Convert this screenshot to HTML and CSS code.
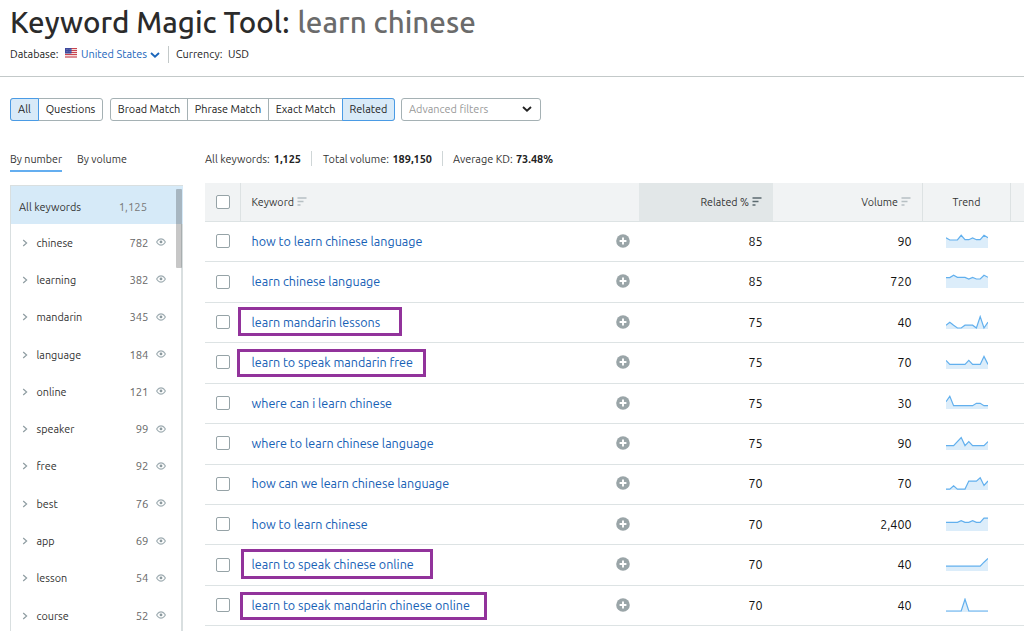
FILE: index.html
```html
<!DOCTYPE html>
<html lang="en">
<head>
<meta charset="utf-8">
<title>Keyword Magic Tool</title>
<link rel="stylesheet" href="styles.css">
</head>
<body>
<svg class="defs" width="0" height="0">
  <symbol id="eye" viewBox="0 0 10 8"><path d="M.6 4C2 1.6 3.3.9 5 .9S8 1.600 9.400 4C8 6.400 6.700 7.100 5 7.100S2 6.400.600 4Z" fill="none" stroke="#a3b0b5" stroke-width="1.100"/><circle cx="5" cy="3.900" r="1.400" fill="#8c9a9f"/></symbol>
  <symbol id="chev" viewBox="0 0 6 8"><path d="M1.200 1 4.600 4 1.200 7" fill="none" stroke="#8f9da2" stroke-width="1.200"/></symbol>
  <symbol id="down" viewBox="0 0 10 6"><path d="M1 1 5 4.600 9 1" fill="none" stroke="currentColor" stroke-width="1.900"/></symbol>
  <symbol id="sort" viewBox="0 0 10 9"><path d="M.5 1H9.500M.5 4.500H6.500M.5 8H3.500" fill="none" stroke="currentColor" stroke-width="1.700"/></symbol>
  <symbol id="plus" viewBox="0 0 14 14"><circle cx="7" cy="7" r="6.800" fill="#9aa5a8"/><path d="M7 3.600V10.400M3.600 7H10.400" stroke="#fff" stroke-width="1.900"/></symbol>
</svg>

<header class="header">
  <h1 class="title"><span class="title-main">Keyword Magic Tool:</span> <span class="title-query">learn chinese</span></h1>
  <div class="meta">
    <span class="meta-label">Database:</span>
    <svg class="flag" viewBox="0 0 12 10"><rect width="12" height="10" fill="#f3dcdc"/><path d="M0 .5H12M0 2.500H12M0 4.500H12M0 6.500H12M0 9H12" stroke="#c9434e"/><rect width="6.500" height="5.500" fill="#3f4a9c"/><path d="M1 1.500H6M1 3.500H6" stroke="#8d94cc" stroke-width=".6" stroke-dasharray=".7 .7"/></svg>
    <a class="country">United States</a>
    <svg class="meta-down"><use href="#down"/></svg>
    <span class="currency-label">Currency:</span>
    <span class="currency">USD</span>
  </div>
</header>

<nav class="filters">
  <div class="group group-a"><span class="btn on w28">All</span><span class="btn w64">Questions</span></div>
  <div class="group group-b"><span class="btn w76">Broad Match</span><span class="btn w81">Phrase Match</span><span class="btn w74">Exact Match</span><span class="btn on w53">Related</span></div>
  <div class="advanced"><span>Advanced filters</span><svg><use href="#down"/></svg></div>
</nav>

<main class="main">
  <aside class="side">
    <div class="tabs"><span class="tab active">By number</span><span class="tab">By volume</span></div>
    <div class="groups">
      <div class="all"><span class="all-name">All keywords</span><span class="all-count">1,125</span></div>
      <div class="thumb"></div>
      <div class="item"><svg class="chev"><use href="#chev"/></svg><span class="name">chinese</span><span class="count">782</span><svg class="eye"><use href="#eye"/></svg></div>
      <div class="item"><svg class="chev"><use href="#chev"/></svg><span class="name">learning</span><span class="count">382</span><svg class="eye"><use href="#eye"/></svg></div>
      <div class="item"><svg class="chev"><use href="#chev"/></svg><span class="name">mandarin</span><span class="count">345</span><svg class="eye"><use href="#eye"/></svg></div>
      <div class="item"><svg class="chev"><use href="#chev"/></svg><span class="name">language</span><span class="count">184</span><svg class="eye"><use href="#eye"/></svg></div>
      <div class="item"><svg class="chev"><use href="#chev"/></svg><span class="name">online</span><span class="count">121</span><svg class="eye"><use href="#eye"/></svg></div>
      <div class="item"><svg class="chev"><use href="#chev"/></svg><span class="name">speaker</span><span class="count">99</span><svg class="eye"><use href="#eye"/></svg></div>
      <div class="item"><svg class="chev"><use href="#chev"/></svg><span class="name">free</span><span class="count">92</span><svg class="eye"><use href="#eye"/></svg></div>
      <div class="item"><svg class="chev"><use href="#chev"/></svg><span class="name">best</span><span class="count">76</span><svg class="eye"><use href="#eye"/></svg></div>
      <div class="item"><svg class="chev"><use href="#chev"/></svg><span class="name">app</span><span class="count">69</span><svg class="eye"><use href="#eye"/></svg></div>
      <div class="item"><svg class="chev"><use href="#chev"/></svg><span class="name">lesson</span><span class="count">54</span><svg class="eye"><use href="#eye"/></svg></div>
      <div class="item"><svg class="chev"><use href="#chev"/></svg><span class="name">course</span><span class="count">52</span><svg class="eye"><use href="#eye"/></svg></div>
    </div>
  </aside>

  <section class="content">
    <div class="stats">
      <div class="stat s1"><span>All keywords:</span><b>1,125</b></div>
      <div class="stat s2"><span>Total volume:</span><b>189,150</b></div>
      <div class="stat s3"><span>Average KD:</span><b>73.48%</b></div>
    </div>
    <div class="table">
      <div class="row head">
        <div class="cell check"><i class="box"></i></div>
        <div class="cell kw"><span class="h-kw">Keyword</span><svg class="sort"><use href="#sort"/></svg></div>
        <div class="cell num sorted"><span class="h-rel">Related %</span><svg class="sort"><use href="#sort"/></svg></div>
        <div class="cell num vol"><span class="h-vol">Volume</span><svg class="sort"><use href="#sort"/></svg></div>
        <div class="cell trend">Trend</div>
        <div class="cell last"></div>
      </div>
      <div class="row"><div class="cell check"><i class="box"></i></div><div class="cell kw"><a>how to learn chinese language</a><svg class="plus"><use href="#plus"/></svg></div><div class="cell num">85</div><div class="cell num vol">90</div><div class="cell trend"><svg class="spark"><path class="fill" d="M0 3.700 3.800 6H11.400L15.200 1.300 19 5.700H22.800L26.600 4 30.400 5.700H34.200L38 1.300 42 3.700V14H0Z"/><path class="line" d="M0 3.700 3.800 6H11.400L15.200 1.300 19 5.700H22.800L26.600 4 30.400 5.700H34.200L38 1.300 42 3.700"/></svg></div></div>
      <div class="row"><div class="cell check"><i class="box"></i></div><div class="cell kw"><a>learn chinese language</a><svg class="plus"><use href="#plus"/></svg></div><div class="cell num">85</div><div class="cell num vol">720</div><div class="cell trend"><svg class="spark"><path class="fill" d="M0 3.600H3.800L7.600 1.300 11.400 3.400H19L22.800 5 26.600 3.400 30.400 5H34.200L38 1.300 42 3.300V14H0Z"/><path class="line" d="M0 3.600H3.800L7.600 1.300 11.400 3.400H19L22.800 5 26.600 3.400 30.400 5H34.200L38 1.300 42 3.300"/></svg></div></div>
      <div class="row"><div class="cell check"><i class="box"></i></div><div class="cell kw"><a>learn mandarin lessons</a><i class="mark m1"></i><svg class="plus"><use href="#plus"/></svg></div><div class="cell num">75</div><div class="cell num vol">40</div><div class="cell trend"><svg class="spark"><path class="fill" d="M0 10.200 3.800 7.200 7.600 10.200 11.400 13H15.200L19 10.200H26.600L30.400 13 34.200 1.600 38 13 42 7.200V14H0Z"/><path class="line" d="M0 10.200 3.800 7.200 7.600 10.200 11.400 13H15.200L19 10.200H26.600L30.400 13 34.200 1.600 38 13 42 7.200"/></svg></div></div>
      <div class="row"><div class="cell check"><i class="box"></i></div><div class="cell kw"><a>learn to speak mandarin free</a><i class="mark m2"></i><svg class="plus"><use href="#plus"/></svg></div><div class="cell num">75</div><div class="cell num vol">70</div><div class="cell trend"><svg class="spark"><path class="fill" d="M0 5.400 3.800 9.400H19L22.800 5.400 26.600 9.400H34.200L38 1.400 42 9.400V14H0Z"/><path class="line" d="M0 5.400 3.800 9.400H19L22.800 5.400 26.600 9.400H34.200L38 1.400 42 9.400"/></svg></div></div>
      <div class="row"><div class="cell check"><i class="box"></i></div><div class="cell kw"><a>where can i learn chinese</a><svg class="plus"><use href="#plus"/></svg></div><div class="cell num">75</div><div class="cell num vol">30</div><div class="cell trend"><svg class="spark"><path class="fill" d="M0 6.700 3.800 1.300 7.600 10.700H26.600L30.400 8.300H34.200L38 10.700H42V14H0Z"/><path class="line" d="M0 6.700 3.800 1.300 7.600 10.700H26.600L30.400 8.300H34.200L38 10.700H42"/></svg></div></div>
      <div class="row"><div class="cell check"><i class="box"></i></div><div class="cell kw"><a>where to learn chinese language</a><svg class="plus"><use href="#plus"/></svg></div><div class="cell num">75</div><div class="cell num vol">90</div><div class="cell trend"><svg class="spark"><path class="fill" d="M0 9.600H7.600L15.200 1.600 19 9.600 22.800 5.600 26.600 9.600H38L42 5.600V14H0Z"/><path class="line" d="M0 9.600H7.600L15.200 1.600 19 9.600 22.800 5.600 26.600 9.600H38L42 5.600"/></svg></div></div>
      <div class="row"><div class="cell check"><i class="box"></i></div><div class="cell kw"><a>how can we learn chinese language</a><svg class="plus"><use href="#plus"/></svg></div><div class="cell num">70</div><div class="cell num vol">70</div><div class="cell trend"><svg class="spark"><path class="fill" d="M0 13.100H3.800L7.600 9.800 11.400 13.100H19L22.800 5.100H30.400L34.200 1.800 38 9.400 42 5V14H0Z"/><path class="line" d="M0 13.100H3.800L7.600 9.800 11.400 13.100H19L22.800 5.100H30.400L34.200 1.800 38 9.400 42 5"/></svg></div></div>
      <div class="row"><div class="cell check"><i class="box"></i></div><div class="cell kw"><a>how to learn chinese</a><svg class="plus"><use href="#plus"/></svg></div><div class="cell num">70</div><div class="cell num vol">2,400</div><div class="cell trend"><svg class="spark"><path class="fill" d="M0 5.400H11.400L15.200 3.700 19 5.400H22.800L26.600 3.700 30.400 5.400H34.200L38 1.100H42V14H0Z"/><path class="line" d="M0 5.400H11.400L15.200 3.700 19 5.400H22.800L26.600 3.700 30.400 5.400H34.200L38 1.100H42"/></svg></div></div>
      <div class="row"><div class="cell check"><i class="box"></i></div><div class="cell kw"><a>learn to speak chinese online</a><i class="mark m3"></i><svg class="plus"><use href="#plus"/></svg></div><div class="cell num">70</div><div class="cell num vol">40</div><div class="cell trend"><svg class="spark"><path class="fill" d="M0 9.200H34.200L38 5.200 42 1.500V14H0Z"/><path class="line" d="M0 9.200H34.200L38 5.200 42 1.500"/></svg></div></div>
      <div class="row"><div class="cell check"><i class="box"></i></div><div class="cell kw"><a>learn to speak mandarin chinese online</a><i class="mark m4"></i><svg class="plus"><use href="#plus"/></svg></div><div class="cell num">70</div><div class="cell num vol">40</div><div class="cell trend"><svg class="spark"><path class="fill" d="M0 13H15.200L19 1.200 22.800 13H42V14H0Z"/><path class="line" d="M0 13H15.200L19 1.200 22.800 13H42"/></svg></div></div>
    </div>
  </section>
</main>
</body>
</html>
```

FILE: styles.css
```css
* { box-sizing: border-box; }
html, body { margin: 0; height: 631px; overflow: hidden; }
body { display: flex; flex-direction: column; background: #fff; color: #333; font: 10.9px/16px Ubuntu, "Noto Sans", sans-serif; white-space: nowrap; }
svg { display: block; flex: none; }
.defs { position: absolute; }

.header { flex: none; height: 77px; border-bottom: 1px solid #c3c9c9; padding-left: 10px; }
.title { margin: 0; height: 45px; font-size: 29.55px; line-height: 45px; font-weight: 500; display: flex; gap: 8px; color: #2b2b2b; }
.title-query { color: #6b6b6b; }
.meta { display: flex; align-items: center; height: 18px; color: #222; }
.meta span, .meta a { line-height: 17px; }
.meta-label { width: 55px; }
.flag { width: 12px; height: 10px; margin-top: -2px; }
.country { margin-left: 4px; width: 69px; color: #1b66bb; }
.meta-down { width: 10px; height: 6px; color: #1b66bb; margin-top: 2px; }
.currency-label { border-left: 1px solid #c3c9c9; margin-left: 8px; padding-left: 7px; width: 60px; }

.filters { flex: none; display: flex; height: 44px; padding: 21px 0 0 10px; }
.group { display: flex; height: 23px; border: 1px solid #a5b1b4; border-radius: 3px; }
.group-a { width: 93px; margin-right: 7px; }
.group-b { width: 285px; margin-right: 6px; }
.btn { display: flex; align-items: center; justify-content: center; border-left: 1px solid #a5b1b4; padding-bottom: 1px; color: #222; }
.btn:first-child { border-left: 0; }
.btn.on { background: #d8eaf8; border: 1px solid #4a9be5; margin: -1px; }
.btn.on:first-child { border-left: 1px solid #4a9be5; border-radius: 3px 0 0 3px; margin-right: 0; }
.btn.on:last-child { border-radius: 0 3px 3px 0; margin-left: 0; }
.btn.on + .btn { border-left: 0; }
.w28 { width: 29px; } .w64 { width: 63px; } .w76 { width: 76px; } .w81 { width: 81px; } .w74 { width: 74px; } .w53 { width: 53px; }
.advanced { display: flex; align-items: center; justify-content: space-between; width: 140px; height: 23px; border: 1px solid #a5b1b4; border-radius: 3px; padding: 0 8px 1px 7px; color: #999; }
.advanced svg { width: 10px; height: 6px; color: #222; }

.main { flex: 1; display: flex; min-height: 0; }
.side { width: 173px; margin-left: 10px; flex: none; }
.tabs { display: flex; gap: 15px; height: 64px; padding-top: 30px; font-size: 10.7px; }
.tab { height: 21px; }
.tab.active { width: 52px; border-bottom: 2px solid #64aef0; }
.groups { position: relative; height: 446px; border: solid #d9dfe0; border-width: 1px 2px 0 1px; }
.all { display: flex; align-items: center; height: 38px; margin-right: -2px; background: #d6eaf8; padding: 3px 36px 0 8px; justify-content: space-between; }
.all-count { color: #777; font-size: 11.3px; }
.thumb { position: absolute; right: -1px; top: 3px; width: 6px; height: 79px; border-radius: 1px; background: rgba(0,0,0,.22); }
.item { display: flex; align-items: center; height: 37.3px; padding: 0 15px 0 10.5px; }
.chev { width: 6px; height: 8px; }
.name { margin-left: 9px; flex: 1; font-size: 10.8px; }
.count { color: #666; font-size: 11.3px; margin-right: 7.5px; }
.eye { width: 10px; height: 8px; margin-top: -1px; }

.content { flex: 1; margin-left: 22px; min-width: 0; }
.stats { display: flex; height: 62px; padding-top: 30px; }
.stat { display: flex; justify-content: space-between; height: 15px; }
.stat + .stat { border-left: 1px solid #cfd6d7; }
.s1 { width: 96px; margin-right: 10px; }
.s2 { width: 121px; padding-left: 11px; margin-right: 10px; }
.s3 { width: 111px; padding-left: 10px; }
.stat b { color: #222; }
.row { display: grid; grid-template-columns: 35px 399px 134px 149px 88px 14px; height: 40.430px; border-bottom: 1px solid #dde3e4; }
.head { height: 39px; background: #f1f3f4; font-size: 10.7px; }
.cell { display: flex; align-items: center; min-width: 0; }
.head .cell { border-left: 1px solid #dde2e3; }
.head .check, .head .sorted, .head .vol { border-left: 0; }
.check { padding-left: 11px; }
.row:not(.head) .check { padding-bottom: 1px; }
.head .check { padding-bottom: 1px; }
.box { width: 14px; height: 14px; border: 1px solid #96a3a7; border-radius: 2px; background: #fff; }
.kw { position: relative; padding: 0 9.5px 0 11.5px; }
.row:not(.head) .kw { font-size: 12.560px; color: #1560b5; justify-content: space-between; padding-bottom: 1.5px; }
.head .kw { padding-left: 10.5px; }
.plus { width: 14px; height: 14px; }
.num { justify-content: flex-end; padding-right: 10.5px; }
.head .num { padding-right: 11px; }
.row:not(.head) .num { font-size: 12.500px; color: #111; padding-bottom: 1.5px; }
.sorted { background: #e2e7e8; }
.sort { width: 10px; height: 9px; margin: -1px 0 0 3px; color: #b7c0c3; }
.sorted .sort { color: #5c6b70; }
.trend { justify-content: center; }
.row:not(.head) .trend { padding-left: 1px; }
.spark { width: 42px; height: 16px; }
.fill { fill: #dcedfa; }
.line { fill: none; stroke: #62b0ee; stroke-width: 1.200; }
.mark { position: absolute; border: 3px solid #92339b; }
.m1 { left: -2px; top: 4px; width: 164px; height: 29px; }
.m2 { left: -3px; top: 6px; width: 189px; height: 28px; }
.m3 { left: 1px; top: 4px; width: 192px; height: 30px; }
.m4 { left: 0; top: 6px; width: 247px; height: 28px; }
```
